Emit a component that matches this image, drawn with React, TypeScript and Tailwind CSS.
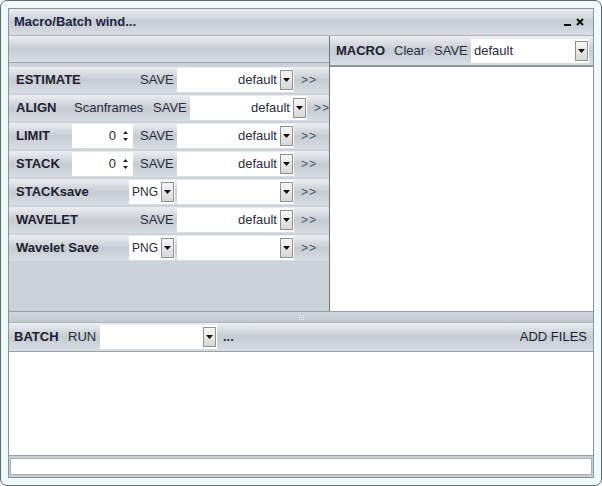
import React, { FC } from 'react';

const bar = 'bg-linear-to-b from-[#eceef2] via-[#c6cbd3] to-[#d9dde3]';

const Arrow: FC = () => (
  <div className="flex h-[20px] w-[13px] shrink-0 items-center justify-center border border-[#8d9096] bg-linear-to-b from-[#f6f6f6] to-[#d8d8d8]">
    <svg width="7" height="4" viewBox="0 0 7 4">
      <path d="M0 0h7L3.5 4z" fill="#111" />
    </svg>
  </div>
);

interface ComboProps {
  width: string;
  text?: string;
  align?: 'left' | 'right';
  small?: boolean;
}

const Combo: FC<ComboProps> = ({ width, text = '', align = 'right', small = false }) => (
  <div className={`flex h-[24px] shrink-0 items-center bg-white pr-[1px] ${width}`}>
    <div
      className={`flex-1 overflow-hidden whitespace-nowrap text-[#2a2a40] ${small ? 'text-[12px]' : 'text-[13px]'} ${
        align === 'right' ? 'px-[3px] text-right' : 'pl-[3px] text-left'
      }`}
    >
      {text}
    </div>
    <Arrow />
  </div>
);

const Spin: FC = () => (
  <div className="flex h-[24px] w-[61px] shrink-0 items-center bg-white">
    <div className="flex-1 pr-[5px] text-right text-[13px] text-[#2a2a40]">0</div>
    <div className="flex w-[12px] flex-col items-center gap-[4px] pr-[3px]">
      <svg width="5" height="3" viewBox="0 0 5 3">
        <path d="M2.5 0L5 3H0z" fill="#222" />
      </svg>
      <svg width="5" height="3" viewBox="0 0 5 3">
        <path d="M0 0h5L2.5 3z" fill="#222" />
      </svg>
    </div>
  </div>
);

const More: FC = () => <div className="ml-[7px] shrink-0 tracking-[1px] text-[12px] text-[#4a5468]">&gt;&gt;</div>;

const Label: FC<{ w: string; children: React.ReactNode }> = ({ w, children }) => (
  <div className={`shrink-0 font-bold text-[13px] text-[#1c2030] ${w}`}>{children}</div>
);

const Txt: FC<{ w: string; children: React.ReactNode }> = ({ w, children }) => (
  <div className={`shrink-0 text-[13px] text-[#2a2e3c] ${w}`}>{children}</div>
);

const Row: FC<{ children: React.ReactNode }> = ({ children }) => (
  <div className={`flex h-[26px] items-center overflow-hidden pl-[7px] ${bar}`}>{children}</div>
);

const App: FC = () => {
  return (
    <div
      className="h-[486px] w-[602px] overflow-hidden rounded-[7px] border border-[#5f6a6c] bg-[#f1fafa] p-[7px]"
      style={{ fontFamily: '"Liberation Sans", Arial, sans-serif' }}
    >
      <div className="flex h-full flex-col border border-[#8c929b] bg-[#cdd2da]">
        {/* title */}
        <div className={`flex h-[26px] shrink-0 items-center px-[5px] ${bar}`}>
          <div className="flex-1 font-bold text-[13px] text-[#1a2440]">Macro/Batch wind...</div>
          <div className="flex items-center gap-[5px] pr-[4px] font-bold text-[#111]">
            <div className="mt-[5px] h-[2px] w-[7px] bg-[#111]" />
            <svg width="8" height="8" viewBox="0 0 8 8">
              <path d="M1 1l6 6M7 1L1 7" stroke="#111" strokeWidth="2" />
            </svg>
          </div>
        </div>

        {/* top */}
        <div className="flex h-[276px] shrink-0 border-t border-[#aeb3bb]">
          <div className="flex w-[321px] shrink-0 flex-col border-r border-[#6e7480]">
            <div className={`h-[27px] shrink-0 border-b border-[#9ca2ab] ${bar}`} />
            <div className="flex flex-col gap-[2px] pt-[4px]">
              <Row>
                <Label w="w-[124px]">ESTIMATE</Label>
                <Txt w="w-[37px]">SAVE</Txt>
                <Combo width="w-[117px]" text="default" />
                <More />
              </Row>
              <Row>
                <Label w="w-[58px]">ALIGN</Label>
                <Txt w="w-[79px]">Scanframes</Txt>
                <Txt w="w-[37px]">SAVE</Txt>
                <Combo width="w-[117px]" text="default" />
                <More />
              </Row>
              <Row>
                <Label w="w-[56px]">LIMIT</Label>
                <Spin />
                <div className="w-[7px] shrink-0" />
                <Txt w="w-[37px]">SAVE</Txt>
                <Combo width="w-[117px]" text="default" />
                <More />
              </Row>
              <Row>
                <Label w="w-[56px]">STACK</Label>
                <Spin />
                <div className="w-[7px] shrink-0" />
                <Txt w="w-[37px]">SAVE</Txt>
                <Combo width="w-[117px]" text="default" />
                <More />
              </Row>
              <Row>
                <Label w="w-[113px]">STACKsave</Label>
                <Combo width="w-[46px]" text="PNG" align="left" small />
                <div className="w-[2px] shrink-0" />
                <Combo width="w-[117px]" />
                <More />
              </Row>
              <Row>
                <Label w="w-[124px]">WAVELET</Label>
                <Txt w="w-[37px]">SAVE</Txt>
                <Combo width="w-[117px]" text="default" />
                <More />
              </Row>
              <Row>
                <Label w="w-[113px]">Wavelet Save</Label>
                <Combo width="w-[46px]" text="PNG" align="left" small />
                <div className="w-[2px] shrink-0" />
                <Combo width="w-[117px]" />
                <More />
              </Row>
            </div>
          </div>
          <div className="flex flex-1 flex-col">
            <div className={`flex h-[29px] shrink-0 items-center pl-[6px] pr-[4px] ${bar}`}>
              <Label w="w-[58px]">MACRO</Label>
              <Txt w="w-[40px]">Clear</Txt>
              <Txt w="w-[37px]">SAVE</Txt>
              <Combo width="w-[118px]" text="default" align="left" />
            </div>
            <div className="flex-1 border-t-2 border-[#8e949c] bg-white" />
          </div>
        </div>

        {/* splitter */}
        <div className="flex h-[11px] shrink-0 items-center justify-center border-t border-[#9aa0a8] bg-linear-to-b from-[#d2d6dc] to-[#c2c7cf]">
          <div className="grid grid-cols-3 gap-[1px]">
            {Array.from({ length: 9 }).map((_, i) => (
              <div key={i} className="h-[1px] w-[1px] bg-[#eef0f3]" />
            ))}
          </div>
        </div>

        {/* batch */}
        <div className={`flex h-[29px] shrink-0 items-center border-t border-[#b2b7be] pl-[5px] pr-[6px] ${bar}`}>
          <Label w="w-[54px]">BATCH</Label>
          <Txt w="w-[32px]">RUN</Txt>
          <Combo width="w-[117px]" />
          <div className="ml-[6px] text-[13px] font-bold text-[#2a2e3c]">...</div>
          <div className="flex-1" />
          <div className="text-[13px] text-[#1c2030]">ADD FILES</div>
        </div>

        {/* list */}
        <div className="flex-1 border-t border-[#9aa0a8] bg-white" />

        {/* status */}
        <div className="flex h-[22px] shrink-0 items-center border-t border-[#9aa0a8] bg-[#c9ced6] px-[1px]">
          <div className="h-[17px] w-full border border-[#aab0b8] bg-white" />
        </div>
      </div>
    </div>
  );
};

export default App;
